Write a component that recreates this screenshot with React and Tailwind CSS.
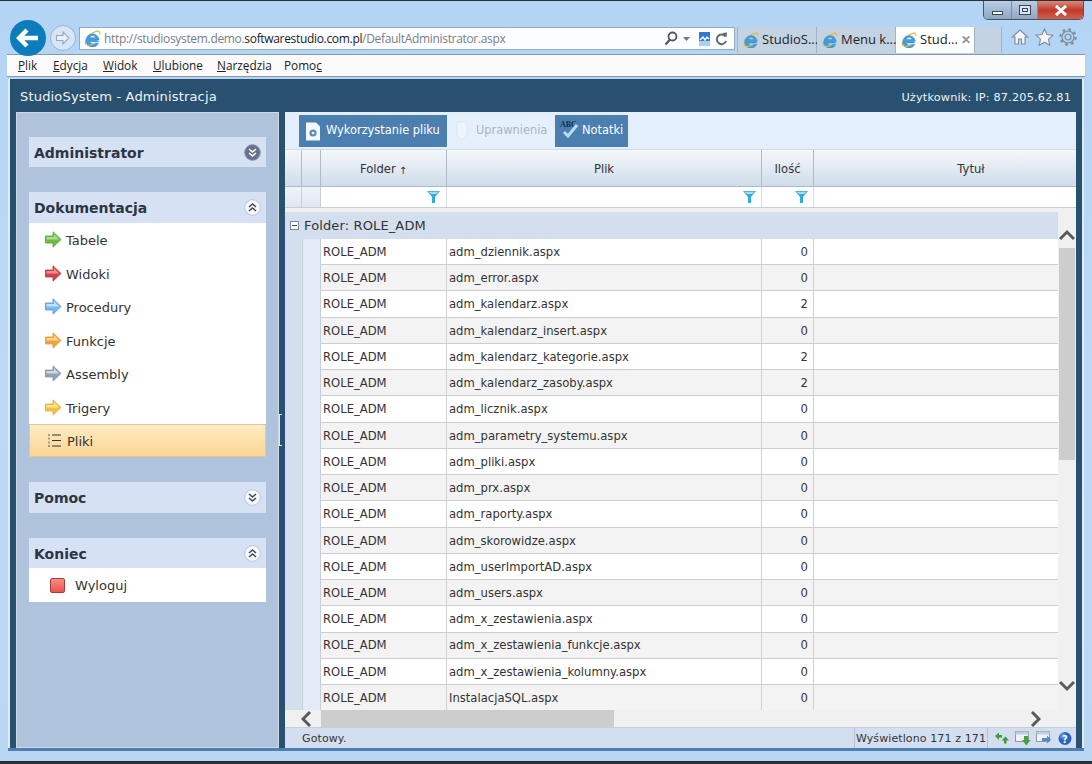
import React from "react";

const rowsData = [
  ["adm_dziennik.aspx", 0], ["adm_error.aspx", 0], ["adm_kalendarz.aspx", 2], ["adm_kalendarz_insert.aspx", 0],
  ["adm_kalendarz_kategorie.aspx", 2], ["adm_kalendarz_zasoby.aspx", 2], ["adm_licznik.aspx", 0], ["adm_parametry_systemu.aspx", 0],
  ["adm_pliki.aspx", 0], ["adm_prx.aspx", 0], ["adm_raporty.aspx", 0], ["adm_skorowidze.aspx", 0],
  ["adm_userImportAD.aspx", 0], ["adm_users.aspx", 0], ["adm_x_zestawienia.aspx", 0], ["adm_x_zestawienia_funkcje.aspx", 0],
  ["adm_x_zestawienia_kolumny.aspx", 0], ["InstalacjaSQL.aspx", 0],
];

function IeLogo({ size = 18 }) {
  return (
    <svg width={size} height={size} viewBox="0 0 18 18" className="shrink-0">
      <path d="M2 15.5C0 13 5 4 13 1.5c3-.8 4.5.5 3.5 3" fill="none" stroke="#e8b93a" strokeWidth="1.3" />
      <path d="M12.6 10.8h3.4a7 7 0 1 0-.6 3.2h-3.2a3.6 3.6 0 0 1-6-1.6h9.8M6 8.3a3.3 3.3 0 0 1 6.4 0z" fill="#3f9fe0" stroke="#2a78bd" strokeWidth=".5" />
      <path d="M3 16c1.5 1 5-.3 8-2" fill="none" stroke="#e8b93a" strokeWidth="1.2" />
    </svg>
  );
}

function Arrow({ fill, stroke, light }) {
  return (
    <svg width="17" height="17" viewBox="0 0 17 17" className="shrink-0">
      <path d="M.5 5h7.5V.8l8 7.7-8 7.7V12H.5z" fill={fill} stroke={stroke} strokeWidth=".8" />
      <path d="M1.5 6h7.5V3l5 5.5H1.5z" fill={light} />
    </svg>
  );
}

function Chev({ up, dark }) {
  return (
    <svg width="17" height="17" viewBox="0 0 17 17" className="shrink-0">
      <circle cx="8.5" cy="8.5" r="7.8" fill={dark ? "#69708f" : "#f7f9fc"} stroke={dark ? "#8a90aa" : "#b9c5d6"} />
      <path d={up ? "M5 8l3.5-3L12 8M5 12l3.5-3 3.5 3" : "M5 5l3.5 3L12 5M5 9l3.5 3L12 9"} fill="none" stroke={dark ? "#fff" : "#434a5e"} strokeWidth="1.6" />
    </svg>
  );
}

function Funnel() {
  return (
    <svg width="13" height="12" viewBox="0 0 13 12">
      <path d="M0 0h13L8 6v6H5V6z" fill="#36a9dc" />
      <path d="M1.5 .8h10L9 3H4z" fill="#a6dcf4" />
    </svg>
  );
}

function ScrollChev({ dir }) {
  const d = { up: "M1 10L8 3l7 7", down: "M1 2l7 7 7-7", left: "M9 1L2 8l7 7", right: "M2 1l7 7-7 7" }[dir];
  const vert = dir === "up" || dir === "down";
  return (
    <svg width={vert ? 16 : 11} height={vert ? 12 : 16} viewBox={vert ? "0 0 16 12" : "0 0 11 16"}>
      <path d={d} fill="none" stroke="#5a5a5a" strokeWidth="3" />
    </svg>
  );
}

function Header({ title, up, dark, mt, h }) {
  return (
    <div className={`flex items-center justify-between ${h} bg-[#d6e2f3] pl-[5px] pr-[5px] text-[14px] font-bold text-[#2e3542] ${mt}`}>
      <span className="pt-[2px]">{title}</span>
      <Chev up={up} dark={dark} />
    </div>
  );
}

function Item({ arrow, label }) {
  return (
    <div className="flex items-center h-[33.5px] pl-[16px] gap-[4px] text-[13px] text-[#333]">
      <Arrow {...arrow} />
      <span className="pt-[2px]">{label}</span>
    </div>
  );
}

function WinButtons() {
  return (
    <div className="flex h-[19px] w-[101px] mr-[8px] rounded-b-[5px] border border-t-0 border-[#4a5560] overflow-hidden">
      <div className="w-[28px] flex items-end justify-center pb-[4px] border-r border-[#7d8c9c] bg-gradient-to-b from-[#b9cfe6] to-[#8fa6bf]">
        <div className="w-[11px] h-[4px] border border-[#3c4650] bg-white" />
      </div>
      <div className="w-[26px] flex items-center justify-center border-r border-[#7d8c9c] bg-gradient-to-b from-[#b9cfe6] to-[#8fa6bf]">
        <div className="w-[12px] h-[10px] border border-[#3c4650] flex items-center justify-center bg-[#dbe7f2]">
          <div className="w-[6px] h-[4px] border border-[#3c4650]" />
        </div>
      </div>
      <div className="flex-1 flex items-center justify-center bg-gradient-to-b from-[#d98a7a] via-[#c0392b] to-[#d0604f]">
        <svg width="14" height="11" viewBox="0 0 14 11"><path d="M2 1l10 9M12 1L2 10" stroke="#fff" strokeWidth="3" /></svg>
      </div>
    </div>
  );
}

function Tab({ label, active, x }) {
  return (
    <div className={`w-[79px] h-[26px] flex items-center gap-[3px] pl-[5px] text-[13px] border-r border-[#9fb4c8] ${active ? "bg-white" : "bg-[#c3d3e2]"} text-[#222]`}>
      <IeLogo size={16} />
      <span className="whitespace-nowrap">{label}</span>
      {x && <span className="text-[#8a939c] text-[12px] font-bold leading-none">✕</span>}
    </div>
  );
}

function MenuItem({ pre, u, post, w }) {
  return (
    <span className={`${w}`}>
      {pre}<span className="underline">{u}</span>{post}
    </span>
  );
}

function ToolBtn({ children, label, w, disabled }) {
  return (
    <div className={`${w} h-[32px] flex items-center gap-[5px] pl-[6px] text-[11.4px] ${disabled ? "bg-[#e6f0fc] text-[#a9b4c0]" : "bg-[#4a7fb0] text-white"}`}>
      {children}
      <span className="whitespace-nowrap">{label}</span>
    </div>
  );
}

export default function App() {
  return (
    <div className="relative w-[1092px] h-[764px] overflow-hidden flex flex-col font-['DejaVu_Sans',sans-serif] bg-gradient-to-b from-[#b4d4f5] via-[#bcdaf6] to-[#b9d7f3] border-t border-[#2b3036]">
      {/* window title row */}
      <div className="h-[19px] flex justify-end shrink-0">
        <WinButtons />
      </div>

      {/* navigation row */}
      <div className="h-[34px] shrink-0 flex items-start pl-[10px] font-['Open_Sans',sans-serif]">
        <div className="relative z-10 w-[36px] h-[36px] rounded-full bg-[#0c7cba] flex items-center justify-center shrink-0">
          <svg width="24" height="20" viewBox="0 0 24 20"><path d="M11 2L3 10l8 8M3 10h19" fill="none" stroke="#fff" strokeWidth="4.4" /></svg>
        </div>
        <div className="ml-[4px] mt-[5px] w-[26px] h-[26px] rounded-full border border-[#9db2c8] bg-[#d5e6f8] flex items-center justify-center shrink-0">
          <svg width="16" height="14" viewBox="0 0 16 14"><path d="M8 1l6 6-6 6V9.5H1.5v-5H8z" fill="#e8f1fa" stroke="#9aaabb" strokeWidth="1.1" /></svg>
        </div>
        <div className="ml-[3px] mt-[7px] w-[656px] h-[23px] shrink-0 flex items-center border border-[#93aac0] bg-[#fbfdff] pl-[4px] text-[12px] text-[#7b7f84] tracking-[-0.027em]">
          <IeLogo size={17} />
          <span className="ml-[3px] whitespace-nowrap">http://studiosystem.demo.<span className="text-[#1c1c1c]">softwarestudio.com.pl</span>/DefaultAdministrator.aspx</span>
          <div className="ml-auto flex items-center gap-[5px] pr-[6px]">
            <svg width="14" height="15" viewBox="0 0 14 15"><circle cx="8.5" cy="5.5" r="4" fill="none" stroke="#555" strokeWidth="1.8" /><path d="M6 8.5L1.5 13.5" stroke="#555" strokeWidth="2.2" /></svg>
            <svg width="7" height="4" viewBox="0 0 7 4"><path d="M0 0h7L3.5 4z" fill="#777" /></svg>
            <svg width="11" height="14" viewBox="0 0 11 14" className="ml-[4px]"><rect width="11" height="14" fill="#2f7bd0" /><path d="M1 8l3-3 2 3 2-3 2 2" fill="none" stroke="#fff" strokeWidth="1.4" /><rect y="9" width="11" height="5" fill="#a8d0f2" /></svg>
            <svg width="13" height="14" viewBox="0 0 13 14"><path d="M10.5 4.5a4.8 4.8 0 1 0 .6 4.5" fill="none" stroke="#666" strokeWidth="2" /><path d="M7.5 1L12 .5l-.5 5z" fill="#666" /></svg>
          </div>
        </div>
        <div className="ml-[2px] mt-[7px] flex shrink-0 border-l border-[#9fb4c8]">
          <Tab label="StudioS..." />
          <Tab label="Menu k..." />
          <Tab label="Stud..." active x />
          <div className="w-[27px] h-[26px] bg-[#c3d3e2] border-r border-[#9fb4c8]" />
        </div>
        <div className="ml-[9px] mt-[8px] flex items-center gap-[5.5px] shrink-0">
          <svg width="18" height="18" viewBox="0 0 18 18"><path d="M1.5 9L9 2l7.5 7h-2.5v7h-3.5v-5h-3v5H4V9z" fill="#f4f8fc" stroke="#7e8c99" strokeWidth="1.1" /></svg>
          <svg width="19" height="18" viewBox="0 0 19 18"><path d="M9.5 1l2.5 5.5 6 .7-4.5 4 1.3 6-5.3-3-5.3 3 1.3-6-4.5-4 6-.7z" fill="#f4f8fc" stroke="#7e8c99" strokeWidth="1.1" /></svg>
          <svg width="18" height="18" viewBox="0 0 18 18"><circle cx="9" cy="9" r="3" fill="none" stroke="#7e8c99" strokeWidth="1.2" /><circle cx="9" cy="9" r="6" fill="none" stroke="#7e8c99" strokeWidth="1.2" /><circle cx="9" cy="9" r="7.6" fill="none" stroke="#7e8c99" strokeWidth="2.2" strokeDasharray="2.6 3.4" /></svg>
        </div>
      </div>

      {/* menu bar */}
      <div className="h-[23px] shrink-0 mx-[7px] flex items-center pl-[11px] bg-[#fbfbfb] border-y border-[#8c97a1] text-[11.8px] text-[#222] font-['Open_Sans',sans-serif]">
        <MenuItem w="w-[35px]" u="P" post="lik" />
        <MenuItem w="w-[50px]" u="E" post="dycja" />
        <MenuItem w="w-[50px]" u="W" post="idok" />
        <MenuItem w="w-[64px]" u="U" post="lubione" />
        <MenuItem w="w-[67px]" u="N" post="arzędzia" />
        <MenuItem pre="Pomo" u="c" />
      </div>

      {/* application */}
      <div className="mt-[2px] ml-[8px] mr-[8px] h-[669px] shrink-0 flex flex-col bg-[#28506f] border-x-2 border-[#dfecfa]">
        <div className="h-[31px] shrink-0 flex items-center justify-between pl-[10px] pr-[11px] pt-[4px] text-white">
          <span className="text-[13.1px] tracking-[0.01em] text-[#eef3f7]">StudioSystem - Administracja</span>
          <span className="mt-[4px] text-[11.3px] tracking-[0.015em] text-[#eef3f7]">Użytkownik: IP: 87.205.62.81</span>
        </div>
        <div className="flex flex-1 pl-[6px] pr-[6px] min-h-0">
          {/* sidebar */}
          <div className="w-[263px] mt-[2px] h-[636px] shrink-0 bg-[#afc3dc] border border-[#cfd8e2] px-[12px] pt-[24px]">
            <Header title="Administrator" dark h="h-[30px]" />
            <Header title="Dokumentacja" up mt="mt-[25px]" h="h-[31px]" />
            <div className="bg-white">
              <Item label="Tabele" arrow={{ fill: "#6ebd45", stroke: "#5c9c3b", light: "#a8e08a" }} />
              <Item label="Widoki" arrow={{ fill: "#d8434a", stroke: "#b3363c", light: "#f08d90" }} />
              <Item label="Procedury" arrow={{ fill: "#74bdf2", stroke: "#5a93c4", light: "#bfe2fb" }} />
              <Item label="Funkcje" arrow={{ fill: "#f0a63c", stroke: "#d99a44", light: "#fad38e" }} />
              <Item label="Assembly" arrow={{ fill: "#93a2b3", stroke: "#8494a4", light: "#cfd8e0" }} />
              <Item label="Trigery" arrow={{ fill: "#efc23f", stroke: "#d6b04a", light: "#fae694" }} />
              <div className="h-[33px] flex items-center pl-[17px] gap-[6px] text-[13px] text-[#333] border border-[#e3c88f] bg-gradient-to-b from-[#ffedc4] to-[#fdd494]">
                <svg width="14" height="13" viewBox="0 0 14 13">
                  <path d="M5 1h9M5 6.5h9M5 12h9" stroke="#333" strokeWidth="1" />
                  <path d="M1.5 1h1M1.5 4.5h1M1.5 8.5h1M1.5 12h1" stroke="#555" strokeWidth="2" />
                </svg>
                <span className="pt-[2px]">Pliki</span>
              </div>
            </div>
            <Header title="Pomoc" mt="mt-[25px]" h="h-[31px]" />
            <Header title="Koniec" up mt="mt-[25px]" h="h-[30px]" />
            <div className="bg-white h-[34px] flex items-center pl-[21px] gap-[10px] text-[13px] text-[#333]">
              <div className="w-[15px] h-[15px] rounded-[2px] border border-[#a83c3c] bg-gradient-to-b from-[#f58e7f] to-[#e6534f]" />
              <span className="pt-[2px]">Wyloguj</span>
            </div>
          </div>

          {/* splitter */}
          <div className="w-[6px] shrink-0 flex items-center">
            <div className="w-[3px] h-[32px] mt-[3px] border-l border-y border-[#dfe7ee]" />
          </div>

          {/* main panel */}
          <div className="flex-1 min-w-0 flex flex-col mt-[2px] bg-[#f0f0f0]">
            <div className="h-[38px] shrink-0 flex pl-[14px] pt-[3px] bg-[#e3effd] border-b border-[#cfdbe8]">
              <ToolBtn label="Wykorzystanie pliku" w="w-[148px]">
                <svg width="16" height="19" viewBox="0 0 16 19"><path d="M1 .5h10l4 4v14H1z" fill="#f5f8fb" /><circle cx="8" cy="11" r="3.6" fill="#5d8fb8" /><circle cx="8" cy="11" r="1.3" fill="#f5f8fb" /></svg>
              </ToolBtn>
              <ToolBtn label="Uprawnienia" w="w-[108px]" disabled>
                <svg width="18" height="20" viewBox="0 0 18 20"><path d="M4 1h10v10c0 4-3 6-5 8-2-2-5-4-5-8z" fill="#eef5fc" stroke="#dbe6f1" /></svg>
              </ToolBtn>
              <ToolBtn label="Notatki" w="w-[73px]">
                <svg width="16" height="20" viewBox="0 0 16 20" className="overflow-visible -mt-[4px]">
                  <text x="-1" y="8" fontSize="8" fontWeight="bold" fontFamily="Liberation Serif" fill="#16304f">ABC</text>
                  <path d="M3 13l4 4 9-11" fill="none" stroke="#b9dcf5" strokeWidth="3" />
                </svg>
              </ToolBtn>
            </div>

            {/* column header */}
            <div className="h-[37px] shrink-0 grid grid-cols-[17px_19px_126px_315px_52px_1fr] text-[11.6px] text-[#333] border-b border-[#b1bbc6] bg-gradient-to-b from-[#f5f8fb] to-[#cfdcea]">
              <div className="border-r border-[#b1bbc6]" />
              <div className="border-r border-[#b1bbc6]" />
              <div className="border-r border-[#b1bbc6] flex items-center justify-center gap-[3px] pt-[4px]">Folder<span className="text-[10px]">↑</span></div>
              <div className="border-r border-[#b1bbc6] flex items-center justify-center pt-[4px]">Plik</div>
              <div className="border-r border-[#b1bbc6] flex items-center justify-center pt-[4px]">Ilość</div>
              <div className="flex items-center justify-center pl-[52px] pt-[4px]">Tytuł</div>
            </div>

            {/* filter row */}
            <div className="h-[21px] shrink-0 grid grid-cols-[17px_19px_126px_315px_52px_1fr] bg-white border-b border-[#c6ced7]">
              <div className="border-r border-[#c6ced7] bg-gradient-to-b from-[#f1f5fa] to-[#dde6f1]" />
              <div className="border-r border-[#c6ced7] bg-gradient-to-b from-[#f1f5fa] to-[#dde6f1]" />
              <div className="border-r border-[#dcdcdc] flex items-center justify-end pr-[6px]"><Funnel /></div>
              <div className="border-r border-[#dcdcdc] flex items-center justify-end pr-[5px]"><Funnel /></div>
              <div className="border-r border-[#dcdcdc] flex items-center justify-end pr-[5px]"><Funnel /></div>
              <div />
            </div>

            {/* body */}
            <div className="h-[498px] shrink-0 mt-[4px] flex bg-[#f0f0f0]">
              <div className="w-[773px] shrink-0 overflow-hidden">
                <div className="h-[27px] flex items-center gap-[5px] pl-[5px] bg-[#d3dfee] text-[13px] tracking-[0.01em] text-[#333]">
                  <div className="w-[9px] h-[9px] border border-[#7f8a96] bg-white flex items-center justify-center"><div className="w-[5px] h-[1px] bg-[#444]" /></div>
                  <span>Folder: ROLE_ADM</span>
                </div>
                {rowsData.map(([f, n], i) => (
                  <div key={f} className={`h-[26.24px] grid grid-cols-[17px_19px_126px_315px_52px_1fr] text-[11.6px] text-[#333] border-b border-[#cdcdcd] ${i % 2 ? "bg-[#f3f3f3]" : "bg-white"}`}>
                    <div className="bg-[#d3dfee] -mb-px" />
                    <div className="bg-[#e2ebf6] border-x border-[#c6ced7] -mb-px" />
                    <div className="border-r border-[#d0d0d0] flex items-center pl-[2px] pt-[2px]">ROLE_ADM</div>
                    <div className="border-r border-[#d0d0d0] flex items-center pl-[2px] pt-[2px]">{f}</div>
                    <div className="border-r border-[#d0d0d0] flex items-center justify-end pr-[5px] pt-[2px]">{n}</div>
                    <div />
                  </div>
                ))}
              </div>
              <div className="w-[18px] shrink-0 flex flex-col items-center">
                <div className="h-[36px] w-full flex items-end justify-center pb-[7px]"><ScrollChev dir="up" /></div>
                <div className="h-[212px] w-[16px] bg-[#cdcdcd]" />
                <div className="mt-auto mb-[18px]"><ScrollChev dir="down" /></div>
              </div>
            </div>

            {/* horizontal scrollbar */}
            <div className="h-[17px] shrink-0 flex items-center bg-[#f0f0f0]">
              <div className="w-[36px] flex justify-center pl-[10px] pr-[4px]"><ScrollChev dir="left" /></div>
              <div className="w-[293px] h-full bg-[#cdcdcd]" />
              <div className="ml-auto mr-[35px]"><ScrollChev dir="right" /></div>
            </div>

            {/* status bar */}
            <div className="h-[21px] shrink-0 flex items-center pl-[17px] bg-[#d3dfee] border-t border-[#c3cfdd] text-[11px] tracking-[0.01em] text-[#333]">
              <span className="pt-[2px]">Gotowy.</span>
              <div className="ml-auto flex items-center h-full">
                <div className="h-full flex items-center px-[1px] pt-[2px] border-x border-[#b4c2d2] whitespace-nowrap">Wyświetlono 171 z 171</div>
                <div className="flex items-center gap-[5px] pl-[6px] pr-[3px]">
                  <svg width="16" height="15" viewBox="0 0 16 15"><path d="M1 5l4-3.5V4h3v2.5H5V9z" fill="#3f9a3c" /><path d="M15 9l-4 3.5V10H8V7.5h3V5z" fill="#3f9a3c" transform="rotate(-90 11.5 9)" /></svg>
                  <svg width="16" height="15" viewBox="0 0 16 15"><rect x=".5" y=".5" width="13" height="10" fill="#eef2f6" stroke="#8d99a6" /><rect x=".5" y=".5" width="13" height="3" fill="#c3ced9" /><path d="M7 9h2V5h4v4h2.5l-4.2 5.5z" fill="#4b9e46" /></svg>
                  <svg width="16" height="15" viewBox="0 0 16 15"><rect x=".5" y=".5" width="13" height="10" fill="#eef2f6" stroke="#8d99a6" /><rect x=".5" y=".5" width="13" height="3" fill="#c3ced9" /><path d="M6 7h5V4.5l4 4-4 4V10H6z" fill="#5b87c5" /></svg>
                  <svg width="16" height="15" viewBox="0 0 16 15"><circle cx="8" cy="7.5" r="6.5" fill="#2a63c4" /><circle cx="6" cy="5" r="3" fill="#7ba6e8" opacity=".6" /><text x="8" y="11.5" fontSize="10" fontWeight="bold" textAnchor="middle" fill="#fff" fontFamily="DejaVu Sans">?</text></svg>
                </div>
              </div>
            </div>
          </div>
        </div>
        <div className="h-[1px]" />
      </div>

      {/* window bottom edge */}
      <div className="mx-[8px] h-[3px] shrink-0 bg-[#4f7fb0]" />
      <div className="flex-1" />
      <div className="h-[3px] shrink-0 bg-[#2b3036]" />
    </div>
  );
}
